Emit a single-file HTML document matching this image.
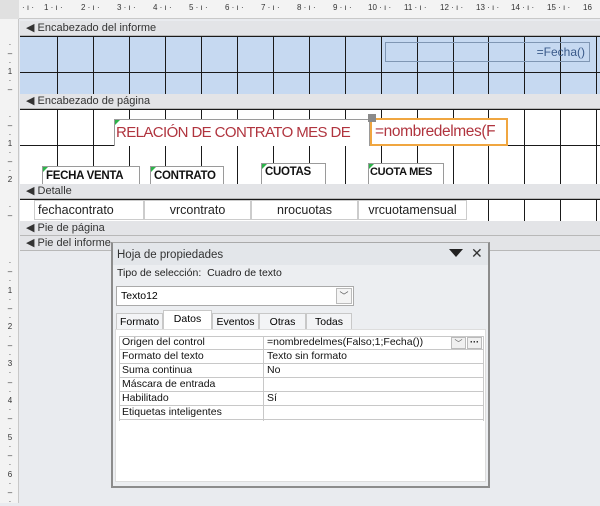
<!DOCTYPE html>
<html><head><meta charset="utf-8"><style>
*{margin:0;padding:0;box-sizing:border-box}
body{width:600px;height:503px;overflow:hidden;background:#e9ebef;font-family:"Liberation Sans",sans-serif;position:relative}
.a{position:absolute}
.bar{position:absolute;left:20px;width:580px;height:15px;background:#e3e4e7;border-bottom:1px solid #b8b8b8;font-size:11px;color:#333;line-height:14px;padding-left:6px}
.vl{position:absolute;width:1px;background:#1a1a1a}
.hl{position:absolute;height:1px;background:#1a1a1a;left:20px;width:580px}
.lbl{position:absolute;background:#fff;border:1px solid #9a9a9a;border-bottom:none;font-weight:bold;font-size:11.5px;color:#111;padding-left:3px;line-height:18px;white-space:nowrap;overflow:hidden;letter-spacing:-0.3px}
.lbl:before{content:"";position:absolute;left:0;top:0;border-top:5px solid #2db34a;border-right:5px solid transparent}
.det{position:absolute;top:200px;height:20px;background:#fff;border:1px solid #ccc;font-size:12.5px;color:#222;line-height:19px}
.row{position:absolute;left:119px;width:365px;height:14px;border-bottom:1px solid #c8c8c8;font-size:10.5px;line-height:13px;color:#111}
.row span{position:absolute;left:3px}
.row b{font-weight:normal;position:absolute;left:148px}
</style></head><body>
<div class="a" style="left:0;top:0;width:600px;height:19px;background:#f3f3f3;border-bottom:1px solid #c8c8c8"></div>
<div class="a" style="left:0;top:0;width:19px;height:503px;background:#f3f3f3;border-right:1px solid #c8c8c8"></div>
<div class="a" style="left:0;top:0;width:19px;height:19px;background:#e0e0e0"></div>
<div class="a" style="left:20px;top:3px;width:580px;font-size:8px;color:#333;white-space:nowrap;letter-spacing:0">
<span class="a" style="left:2px">·&nbsp;ı&nbsp;·</span>
<span class="a" style="left:24px">1&nbsp;·&nbsp;ı&nbsp;·</span><span class="a" style="left:61px">2&nbsp;·&nbsp;ı&nbsp;·</span><span class="a" style="left:97px">3&nbsp;·&nbsp;ı&nbsp;·</span><span class="a" style="left:133px">4&nbsp;·&nbsp;ı&nbsp;·</span><span class="a" style="left:169px">5&nbsp;·&nbsp;ı&nbsp;·</span><span class="a" style="left:205px">6&nbsp;·&nbsp;ı&nbsp;·</span><span class="a" style="left:241px">7&nbsp;·&nbsp;ı&nbsp;·</span><span class="a" style="left:277px">8&nbsp;·&nbsp;ı&nbsp;·</span><span class="a" style="left:313px">9&nbsp;·&nbsp;ı&nbsp;·</span><span class="a" style="left:348px">10&nbsp;·&nbsp;ı&nbsp;·</span><span class="a" style="left:384px">11&nbsp;·&nbsp;ı&nbsp;·</span><span class="a" style="left:420px">12&nbsp;·&nbsp;ı&nbsp;·</span><span class="a" style="left:456px">13&nbsp;·&nbsp;ı&nbsp;·</span><span class="a" style="left:491px">14&nbsp;·&nbsp;ı&nbsp;·</span><span class="a" style="left:527px">15&nbsp;·&nbsp;ı&nbsp;·</span><span class="a" style="left:563px">16</span>
</div>
<div class="a" style="left:6px;top:40px;font-size:8px;line-height:9px;color:#333;width:8px;text-align:center">·<br>–<br>·<br>1<br>·<br>–</div>
<div class="a" style="left:6px;top:112px;font-size:8px;line-height:9px;color:#333;width:8px;text-align:center">·<br>–<br>·<br>1<br>·<br>–<br>·<br>2</div>
<div class="a" style="left:6px;top:202px;font-size:8px;line-height:9px;color:#333;width:8px;text-align:center">·<br>–</div>
<div class="a" style="left:6px;top:258px;font-size:8px;line-height:9.2px;color:#333;width:8px;text-align:center">·<br>–<br>·<br>1<br>·<br>–<br>·<br>2<br>·<br>–<br>·<br>3<br>·<br>–<br>·<br>4<br>·<br>–<br>·<br>5<br>·<br>–<br>·<br>6<br>·<br>–<br>·</div>
<div class="bar" style="top:21px">◀ Encabezado del informe</div>
<div class="a" style="left:20px;top:36px;width:580px;height:58px;background:#c6d9f1"></div>
<div class="bar" style="top:94px">◀ Encabezado de página</div>
<div class="a" style="left:20px;top:109px;width:580px;height:75px;background:#fff"></div>
<div class="bar" style="top:184px">◀ Detalle</div>
<div class="a" style="left:20px;top:199px;width:580px;height:22px;background:#fff"></div>
<div class="bar" style="top:221px">◀ Pie de página</div>
<div class="bar" style="top:236px">◀ Pie del informe</div>
<div class="hl" style="top:36px"></div><div class="hl" style="top:72px"></div><div class="hl" style="top:109px"></div><div class="hl" style="top:145px"></div><div class="hl" style="top:199px"></div>
<div class="vl" style="left:57px;top:36px;height:58px"></div><div class="vl" style="left:93px;top:36px;height:58px"></div><div class="vl" style="left:129px;top:36px;height:58px"></div><div class="vl" style="left:165px;top:36px;height:58px"></div><div class="vl" style="left:201px;top:36px;height:58px"></div><div class="vl" style="left:237px;top:36px;height:58px"></div><div class="vl" style="left:273px;top:36px;height:58px"></div><div class="vl" style="left:309px;top:36px;height:58px"></div><div class="vl" style="left:345px;top:36px;height:58px"></div><div class="vl" style="left:381px;top:36px;height:58px"></div><div class="vl" style="left:417px;top:36px;height:58px"></div><div class="vl" style="left:453px;top:36px;height:58px"></div><div class="vl" style="left:488px;top:36px;height:58px"></div><div class="vl" style="left:524px;top:36px;height:58px"></div><div class="vl" style="left:560px;top:36px;height:58px"></div><div class="vl" style="left:596px;top:36px;height:58px"></div>
<div class="vl" style="left:57px;top:109px;height:75px"></div><div class="vl" style="left:93px;top:109px;height:75px"></div><div class="vl" style="left:129px;top:109px;height:75px"></div><div class="vl" style="left:165px;top:109px;height:75px"></div><div class="vl" style="left:201px;top:109px;height:75px"></div><div class="vl" style="left:237px;top:109px;height:75px"></div><div class="vl" style="left:273px;top:109px;height:75px"></div><div class="vl" style="left:309px;top:109px;height:75px"></div><div class="vl" style="left:345px;top:109px;height:75px"></div><div class="vl" style="left:381px;top:109px;height:75px"></div><div class="vl" style="left:417px;top:109px;height:75px"></div><div class="vl" style="left:453px;top:109px;height:75px"></div><div class="vl" style="left:488px;top:109px;height:75px"></div><div class="vl" style="left:524px;top:109px;height:75px"></div><div class="vl" style="left:560px;top:109px;height:75px"></div><div class="vl" style="left:596px;top:109px;height:75px"></div>
<div class="vl" style="left:488px;top:199px;height:22px"></div><div class="vl" style="left:524px;top:199px;height:22px"></div><div class="vl" style="left:560px;top:199px;height:22px"></div><div class="vl" style="left:596px;top:199px;height:22px"></div>
<div class="a" style="left:385px;top:42px;width:205px;height:20px;border:1px solid #7f96b3;font-size:12px;color:#3a5a8a;text-align:right;padding-right:4px;line-height:18px">=Fecha()</div>
<div class="lbl" style="left:114px;top:119px;width:256px;height:27px;font-weight:normal;font-size:15px;letter-spacing:-0.6px;color:#b0343e;line-height:26px;padding-left:1px">RELACIÓN DE CONTRATO MES DE</div>
<div class="a" style="left:370px;top:118px;width:138px;height:28px;background:#fff;border:2px solid #f0a640;font-size:15.5px;letter-spacing:-0.4px;color:#b0343e;line-height:24px;padding-left:3px;overflow:hidden;white-space:nowrap">=nombredelmes(F</div>
<div class="a" style="left:368px;top:114px;width:8px;height:8px;background:#8a8a8a"></div>
<div class="lbl" style="left:42px;top:166px;width:98px;height:18px">FECHA VENTA</div>
<div class="lbl" style="left:150px;top:166px;width:74px;height:18px">CONTRATO</div>
<div class="lbl" style="left:261px;top:163px;width:65px;height:21px;line-height:16px">CUOTAS</div>
<div class="lbl" style="left:368px;top:163px;width:76px;height:21px;line-height:16px;font-size:11px;padding-left:1px">CUOTA MES</div>
<div class="det" style="left:34px;width:110px;padding-left:3px">fechacontrato</div>
<div class="det" style="left:144px;width:107px;text-align:center">vrcontrato</div>
<div class="det" style="left:251px;width:107px;text-align:center">nrocuotas</div>
<div class="det" style="left:358px;width:109px;text-align:center">vrcuotamensual</div>
<div class="a" style="left:111px;top:242px;width:379px;height:246px;background:#eceef1;border:2px solid #8c8c8c;border-top:1px solid #aaa"></div>
<div class="a" style="left:113px;top:243px;width:375px;height:22px;background:#e3e6ea"></div>
<div class="a" style="left:117px;top:249px;font-size:11.5px;color:#333">Hoja de propiedades</div>
<div class="a" style="left:449px;top:249px;width:0;height:0;border-left:7px solid transparent;border-right:7px solid transparent;border-top:8px solid #222"></div>
<div class="a" style="left:471px;top:245px;font-size:14px;color:#333">✕</div>
<div class="a" style="left:117px;top:267px;font-size:10.5px;color:#222">Tipo de selección:&nbsp; Cuadro de texto</div>
<div class="a" style="left:116px;top:286px;width:238px;height:20px;background:#fff;border:1px solid #aaa;font-size:10.5px;line-height:18px;padding-left:4px">Texto12</div>
<div class="a" style="left:336px;top:288px;width:16px;height:16px;border:1px solid #bbb;background:#f4f4f4;font-size:9px;text-align:center;line-height:14px;color:#555">﹀</div>
<div class="a" style="left:116px;top:313px;width:47px;height:17px;border:1px solid #c8c8c8;font-size:10.5px;line-height:16px;text-align:center;background:#f3f4f6">Formato</div>
<div class="a" style="left:163px;top:310px;width:49px;height:20px;border:1px solid #c8c8c8;border-bottom:none;font-size:10.5px;line-height:17px;text-align:center;background:#fff">Datos</div>
<div class="a" style="left:212px;top:313px;width:47px;height:17px;border:1px solid #c8c8c8;font-size:10.5px;line-height:16px;text-align:center;background:#f3f4f6">Eventos</div>
<div class="a" style="left:259px;top:313px;width:47px;height:17px;border:1px solid #c8c8c8;font-size:10.5px;line-height:16px;text-align:center;background:#f3f4f6">Otras</div>
<div class="a" style="left:306px;top:313px;width:46px;height:17px;border:1px solid #c8c8c8;font-size:10.5px;line-height:16px;text-align:center;background:#f3f4f6">Todas</div>
<div class="a" style="left:115px;top:329px;width:371px;height:153px;background:#fff;border:1px solid #ddd"></div>
<div class="a" style="left:119px;top:336px;width:365px;height:85px;border:1px solid #c8c8c8;border-bottom:none"></div>
<div class="a" style="left:263px;top:336px;width:1px;height:85px;background:#c8c8c8"></div>
<div class="row" style="top:336px"><span>Origen del control</span><b>=nombredelmes(Falso;1;Fecha())</b></div>
<div class="row" style="top:350px"><span>Formato del texto</span><b>Texto sin formato</b></div>
<div class="row" style="top:364px"><span>Suma continua</span><b>No</b></div>
<div class="row" style="top:378px"><span>Máscara de entrada</span><b></b></div>
<div class="row" style="top:392px"><span>Habilitado</span><b>Sí</b></div>
<div class="row" style="top:406px"><span>Etiquetas inteligentes</span><b></b></div>
<div class="a" style="left:451px;top:337px;width:15px;height:12px;border:1px solid #bbb;background:#f0f0f0;font-size:8px;text-align:center;line-height:11px;color:#555">﹀</div>
<div class="a" style="left:467px;top:337px;width:15px;height:12px;border:1px solid #bbb;background:#f0f0f0;font-size:9px;text-align:center;line-height:8px;font-weight:bold">···</div>
</body></html>
